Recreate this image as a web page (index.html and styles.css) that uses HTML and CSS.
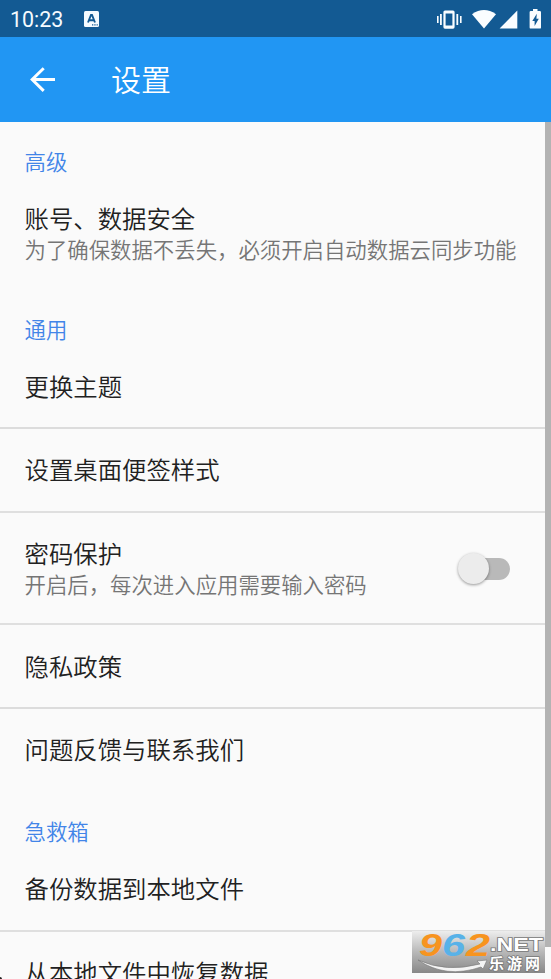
FILE: index.html
```html
<!DOCTYPE html>
<html lang="zh-CN">
<head>
<meta charset="utf-8">
<title>设置</title>
<link rel="stylesheet" href="styles.css">
</head>
<body>
<div class="screen">
  <header class="status">
    <span class="clock">10:23</span>
    <svg class="notice" width="15" height="16" viewBox="0 0 15 16"><rect width="15" height="16" rx="1.5" fill="#f5fbff"/><path d="M4 11.5 7 4h1l3 7.5M5.2 9.2h4.6" fill="none" stroke="#135a93" stroke-width="1.9"/><path d="M8 13.8h1.3M10.3 13.8h1.3M12.6 13.8h1.2" stroke="#135a93" stroke-width="1.3"/></svg>
    <svg class="indicators" width="105" height="22" viewBox="436 7 105 22">
      <g fill="#fafdff">
        <path d="M437 15h1.6v7H437zM440 13h1.8v11H440zM456.400 13h1.800v11h-1.800zM460 15h1.600v7H460z"/>
        <path fill-rule="evenodd" d="M445 9.500h8q1.600 0 1.600 1.600v15q0 1.600-1.600 1.600h-8q-1.600 0-1.600-1.600v-15q0-1.600 1.600-1.600zM445.600 12.500v12h6.800v-12z"/>
        <path d="M472 13.200Q484 4.800 496 13.200L484 27.400z"/>
        <path d="M517.300 9.600v18H499.600z"/>
        <path fill-rule="evenodd" d="M533 8h4.500v2h2.300q1.200 0 1.200 1.200v15.200q0 1.200-1.200 1.200h-9q-1.200 0-1.200-1.200V11.200q0-1.200 1.200-1.200h2.200zM536.800 12.800l-4.500 7.200h2.300v5l4.200-7.200h-2.400z"/>
      </g>
    </svg>
  </header>
  <nav class="bar">
    <svg width="26" height="26" viewBox="0 0 26 26"><path d="M25 12.500H2.500M13.700 1.300 2.200 12.500 13.700 23.900" fill="none" stroke="#fff" stroke-width="3"/></svg>
    <h1>设置</h1>
  </nav>
  <main class="list">
    <h2>高级</h2>
    <section class="row double"><div><p class="title">账号、数据安全</p><p class="summary">为了确保数据不丢失，必须开启自动数据云同步功能</p></div></section>
    <h2 class="general">通用</h2>
    <section class="row line"><p class="title">更换主题</p></section>
    <section class="row line thin"><p class="title">设置桌面便签样式</p></section>
    <section class="row double line thin">
      <div><p class="title">密码保护</p><p class="summary">开启后，每次进入应用需要输入密码</p></div>
      <span class="switch"><span class="thumb"></span></span>
    </section>
    <section class="row line"><p class="title">隐私政策</p></section>
    <section class="row feedback"><p class="title">问题反馈与联系我们</p></section>
    <h2 class="last">急救箱</h2>
    <section class="row line thin"><p class="title">备份数据到本地文件</p></section>
    <section class="row restore"><p class="title">从本地文件中恢复数据</p></section>
  </main>
  <div class="scrollbar"></div>
  <i class="corner"></i>
  <svg class="badge" width="133" height="42" viewBox="0 0 133 42">
    <defs><linearGradient id="fade" x2="0" y2="1"><stop offset="0" stop-color="#ededed"/><stop offset=".5" stop-color="#b8b8b8"/><stop offset="1" stop-color="#888"/></linearGradient></defs>
    <rect width="133" height="42" fill="url(#fade)"/>
    <g class="digits">
      <text x="7" y="25" textLength="23" lengthAdjust="spacingAndGlyphs" fill="#f7941f">9</text>
      <text x="30" y="25" textLength="23" lengthAdjust="spacingAndGlyphs" fill="#58b2e8">6</text>
      <text x="54" y="25" textLength="24" lengthAdjust="spacingAndGlyphs" fill="#f7941f">2</text>
    </g>
    <path d="M6 29Q34 42 68 33L65 30 75 29 71 38 69 36Q34 48 6 29z" fill="#f4f4f4" stroke="#777" stroke-width=".6"/>
    <text class="net" x="78" y="20" textLength="53" lengthAdjust="spacingAndGlyphs">.NET</text>
    <text class="site" x="77" y="37.500" textLength="51">乐游网</text>
  </svg>
</div>
</body>
</html>
```
FILE: styles.css
```css
* { box-sizing: border-box; }
body { margin: 0; background: #fafafa; font-family: Roboto, "Noto Sans CJK SC", sans-serif; }
h1, h2, p { margin: 0; font-weight: 350; white-space: nowrap; }
svg { display: block; flex: none; }
.screen { position: relative; width: 551px; height: 979px; overflow: hidden; }
.status { display: flex; align-items: center; height: 37px; padding: 0 10px; background: #135a93; }
.clock { width: 74px; padding-top: 1px; color: #f5fbff; font-size: 21.4px; line-height: 37px; }
.indicators { margin-left: auto; }
.bar { display: flex; align-items: center; height: 85px; padding-left: 30px; gap: 55px; background: #2196f3; }
.bar h1 { padding-bottom: 4px; color: #fff; font: 350 30px/44px "Noto Sans CJK SC", sans-serif; }
.list { font-family: "Noto Sans CJK SC", sans-serif; }
h2 { height: 55px; padding: 24px 24.500px 0; color: #4285e8; font-size: 21.4px; line-height: 30px; }
.general { height: 56px; padding-top: 25px; }
.last { padding-top: 23px; }
.row { display: flex; height: 84px; padding: 25px 24.500px 0; }
.double { height: 112px; justify-content: space-between; }
.line { border-bottom: 2px solid #dcdcdc; }
.thin { border-bottom-color: #dfdfdf; }
.thin .title { margin-top: -1px; }
.feedback { padding-top: 24px; }
.restore { padding-top: 24px; }
.title { color: #212121; font-size: 24.4px; line-height: 32px; }
.summary { color: #757575; font-size: 21.4px; line-height: 30px; }
.switch { width: 44px; height: 22px; margin: 20px 16.500px 0 0; border-radius: 11px; background: #b9b9b9; }
.thumb { display: block; width: 31px; height: 31px; margin: -5px 0 0 -8px; border-radius: 50%; background: #ececec; box-shadow: 0 1px 3px rgba(0, 0, 0, .4); }
.scrollbar { position: absolute; top: 122px; right: 0; width: 6px; height: 825px; background: #b3b3b3; }
.corner { position: absolute; left: 0; bottom: 0; width: 2px; height: 2px; background: #222; border-radius: 0 2px 0 0; }
.badge { position: absolute; left: 412px; top: 931px; overflow: visible; }
.digits { font: italic 700 31px "Liberation Sans", sans-serif; }
.net { font: 700 18px "Liberation Sans", sans-serif; }
.site { font: 700 15px "Noto Sans CJK SC", sans-serif; }
.net, .site { fill: #fff; stroke: #777; stroke-width: 1.5px; paint-order: stroke; }
```
